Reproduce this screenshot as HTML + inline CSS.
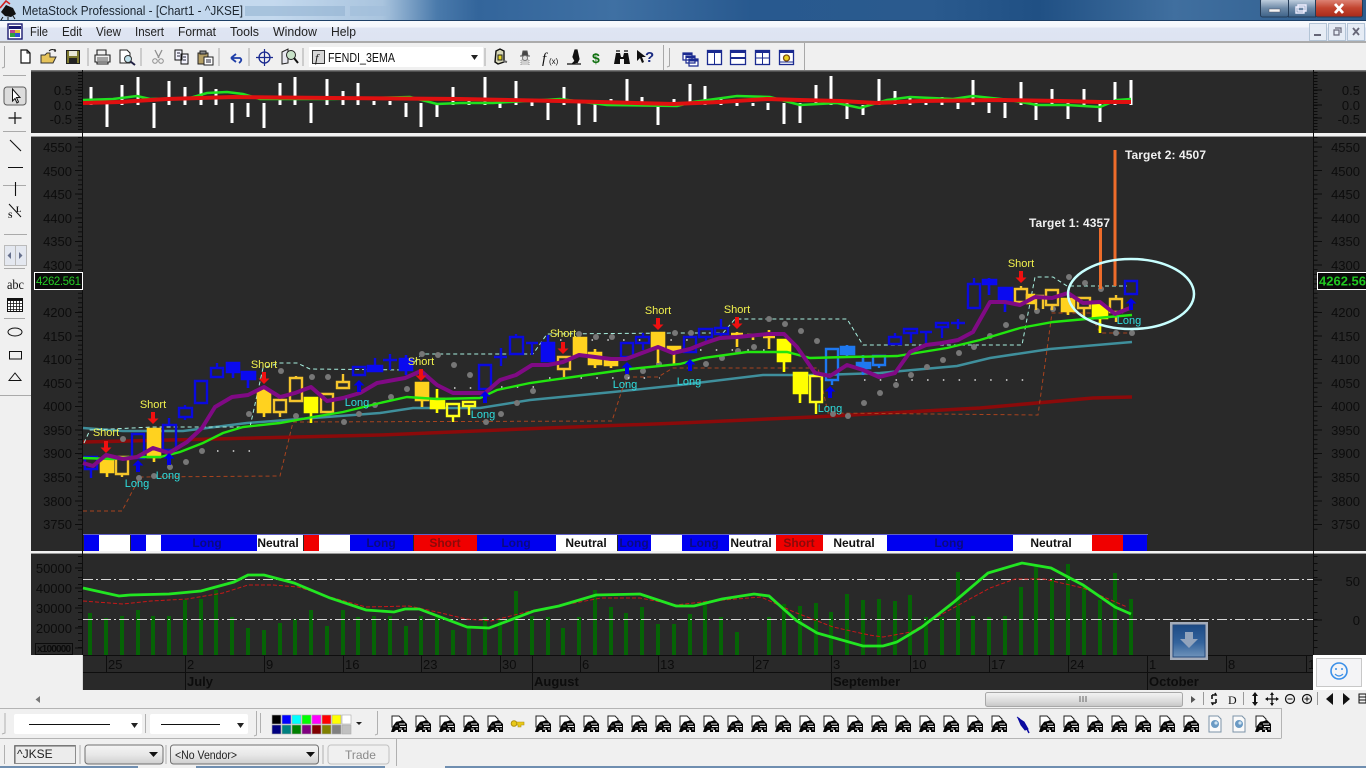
<!DOCTYPE html>
<html><head><meta charset="utf-8"><title>MetaStock</title>
<style>
html,body{margin:0;padding:0;background:#f0f0f0;overflow:hidden}
svg{display:block;position:absolute;left:0;top:0}
text{font-family:"Liberation Sans",sans-serif}
.ax{font-size:13px;fill:#0c0c0c;text-anchor:end}
.dt{font-size:13px;fill:#0c0c0c}
.mo{font-size:13px;font-weight:bold;fill:#0c0c0c}
.sh{font-size:11px;fill:#f2f24e;text-anchor:middle}
.lg{font-size:11px;fill:#2fdede;text-anchor:middle}
.sg{font-size:12px;font-weight:bold;text-anchor:middle}
.mn{font-size:13px;fill:#222}
</style></head><body>
<svg width="1366" height="768" viewBox="0 0 1366 768" xmlns="http://www.w3.org/2000/svg">
<defs>
<linearGradient id="tb" x1="0" x2="1" y1="0" y2="0">
<stop offset="0" stop-color="#c0d6ec"/><stop offset=".2" stop-color="#c4d9ee"/><stop offset=".28" stop-color="#a9c4de"/><stop offset=".32" stop-color="#4a7aab"/><stop offset=".35" stop-color="#33659b"/><stop offset=".45" stop-color="#3f70a3"/><stop offset=".55" stop-color="#28598f"/><stop offset=".68" stop-color="#2a5a8e"/><stop offset=".76" stop-color="#205084"/><stop offset=".86" stop-color="#406f9f"/><stop offset="1" stop-color="#2d5c8d"/>
</linearGradient>
<linearGradient id="mb" x1="0" x2="0" y1="0" y2="1"><stop offset="0" stop-color="#f7f9fd"/><stop offset=".3" stop-color="#f3f6fb"/><stop offset=".35" stop-color="#dfe5f3"/><stop offset="1" stop-color="#dde4f2"/></linearGradient>
<linearGradient id="cl" x1="0" x2="0" y1="0" y2="1"><stop offset="0" stop-color="#e08a7c"/><stop offset=".5" stop-color="#c2442f"/><stop offset="1" stop-color="#a82a1a"/></linearGradient>
<linearGradient id="gb" x1="0" x2="0" y1="0" y2="1"><stop offset="0" stop-color="#c8d6e4"/><stop offset=".5" stop-color="#6f8ba8"/><stop offset="1" stop-color="#3d6288"/></linearGradient>
<linearGradient id="cb" x1="0" x2="0" y1="0" y2="1"><stop offset="0" stop-color="#f5f5f5"/><stop offset=".5" stop-color="#e8e8e8"/><stop offset="1" stop-color="#cfcfcf"/></linearGradient>
<linearGradient id="th" x1="0" x2="0" y1="0" y2="1"><stop offset="0" stop-color="#f4f4f4"/><stop offset=".6" stop-color="#dcdcdc"/><stop offset="1" stop-color="#c6c6c6"/></linearGradient>
<linearGradient id="db" x1="0" x2="0" y1="0" y2="1"><stop offset="0" stop-color="#1c4a85"/><stop offset=".55" stop-color="#33639c"/><stop offset="1" stop-color="#6e93ba"/></linearGradient>
<path id="dn" fill="#f01010" d="M-2 0H2V6.500H5.500L0 12L-5.500 6.500H-2Z"/>
<path id="up" fill="#0000e8" d="M-2 12H2V5.500H5.500L0 0L-5.500 5.500H-2Z"/>
<g id="sp"><path d="M-7-8H0L3-5V-2H-2V3H-7Z" fill="#fff" stroke="#222" stroke-width="1"/><path d="M-8 8L-6 2L-3-2L1-3L4-4L8 0V8H4V6H2V8H-1V6H-3L-5 8Z" fill="#060606"/><path d="M0 0H6M1 2.500H7M0 5H3M5 5H7" stroke="#f0f0f0" fill="none" stroke-width="1"/><path d="M-4 2H-1" stroke="#888" fill="none"/></g>
<g id="dc"><path d="M-6-8H3L6-5V8H-6Z" fill="#fafafa" stroke="#7c93a8"/><circle cy="0" r="4" fill="#6a9ac4"/><circle cx="1" cy="-1" r="1.600" fill="#cfe3f2"/></g>
</defs>

<rect width="1366" height="768" fill="#f0f0f0"/>
<rect width="1366" height="21" fill="url(#tb)"/>
<rect y="20" width="1366" height="1" fill="#1d3f66"/>
<path d="M1 12L6 5L13 8L16 14L11 17L5 16Z" fill="#111"/><path d="M0 8L6 1L10 4" stroke="#d02020" fill="none" stroke-width="1.600"/><path d="M3 17L1 20M8 17L8 20M13 16L15 19" stroke="#111"/>
<text x="22" y="15" font-size="13" fill="#1c2630" textLength="221" lengthAdjust="spacingAndGlyphs">MetaStock Professional - [Chart1 - ^JKSE]</text>
<rect x="245" y="6" width="100" height="10" fill="#8fb0d0" opacity=".55"/><rect x="350" y="6" width="40" height="10" fill="#9fbcd8" opacity=".55"/>
<rect x="1260.500" y="-1" width="28" height="18" rx="2" fill="url(#gb)" stroke="#243c58"/>
<rect x="1288.500" y="-1" width="27" height="18" fill="url(#gb)" stroke="#243c58"/>
<rect x="1315.500" y="-1" width="47" height="18" rx="2" fill="url(#cl)" stroke="#243c58"/>
<rect x="1269" y="9" width="11" height="3" fill="#f4f4f4" stroke="#445" stroke-width=".4"/>
<path d="M1298 5H1306V11H1298ZM1296 7H1304V13H1296Z" fill="none" stroke="#eef" stroke-width="1.400"/>
<path d="M1335 4L1343 13M1343 4L1335 13" stroke="#fff" stroke-width="2.800"/>

<rect y="21" width="1366" height="20" fill="url(#mb)"/>
<rect y="41" width="1366" height="2" fill="#ababab"/>
<rect x="8" y="24" width="14" height="15" fill="#fff" stroke="#1a1a70" stroke-width="1.400"/><rect x="9" y="26" width="12" height="3" fill="#1a1a70"/><rect x="10" y="30" width="5" height="3" fill="#c04090"/><rect x="15" y="30" width="5" height="3" fill="#e0c030"/><rect x="10" y="33" width="5" height="4" fill="#30a040"/><rect x="15" y="33" width="5" height="4" fill="#3050d0"/>
<text class="mn" x="30" y="36" textLength="18" lengthAdjust="spacingAndGlyphs">File</text><text class="mn" x="62" y="36" textLength="20" lengthAdjust="spacingAndGlyphs">Edit</text><text class="mn" x="96" y="36" textLength="25" lengthAdjust="spacingAndGlyphs">View</text><text class="mn" x="135" y="36" textLength="29" lengthAdjust="spacingAndGlyphs">Insert</text><text class="mn" x="178" y="36" textLength="38" lengthAdjust="spacingAndGlyphs">Format</text><text class="mn" x="230" y="36" textLength="29" lengthAdjust="spacingAndGlyphs">Tools</text><text class="mn" x="273" y="36" textLength="44" lengthAdjust="spacingAndGlyphs">Window</text><text class="mn" x="331" y="36" textLength="25" lengthAdjust="spacingAndGlyphs">Help</text>
<rect x="1309.500" y="23.500" width="17" height="17" fill="#e6ecf5" stroke="#b3c4d6"/><rect x="1328.500" y="23.500" width="17" height="17" fill="#e6ecf5" stroke="#b3c4d6"/><rect x="1347.500" y="23.500" width="17" height="17" fill="#e6ecf5" stroke="#b3c4d6"/>
<rect x="1314" y="34" width="7" height="2" fill="#667"/>
<path d="M1335 28H1341V33M1334 30H1339V35H1334Z" fill="none" stroke="#667" stroke-width="1.200"/>
<path d="M1353 28L1359 35M1359 28L1353 35" stroke="#667" stroke-width="1.800"/>

<!-- top toolbar -->
<path d="M4.500 46V67L2 68M88 48V66M141 48V66M219 48V66M249 48V66M303 48V66M485 48V66M663.500 45V70M669.500 48V66L667 67M804.500 43V70" stroke="#a8a8a8" fill="none"/>
<rect x="309" y="47" width="174" height="20" fill="#fff"/>
<path d="M21 50H27L30 53V63H21Z" fill="#fff" stroke="#111" stroke-width="1.200"/><path d="M27 50V53H30" fill="none" stroke="#111"/>
<path d="M41 62V55H45L47 53H50V57H56L53 63H41Z" fill="#e6c35a" stroke="#333"/><path d="M49 51Q52 48 56 51M55 49V52" stroke="#111" fill="none"/>
<rect x="66.500" y="50.500" width="13" height="13" fill="#7d7a30" stroke="#222"/><rect x="69" y="51" width="8" height="5" fill="#e8e8d8"/><rect x="69" y="58" width="8" height="5" fill="#222"/>
<path d="M97 50H106V55H97ZM95 55H110V62H95ZM97 62H108V64H97Z" fill="#f0f0f0" stroke="#222" stroke-width="1.100"/><path d="M97 58H108M97 60H108" stroke="#555"/>
<path d="M120 50H127L130 53V63H120Z" fill="#fff" stroke="#222"/><circle cx="128" cy="59" r="3.500" fill="#bfe0ea" stroke="#333"/><path d="M130.500 61.500L135 65" stroke="#224" stroke-width="2"/>
<path d="M155 50L159 58M162 50L158 58" stroke="#8f8f8f" stroke-width="1.300"/><circle cx="155" cy="61" r="2.300" fill="none" stroke="#8f8f8f"/><circle cx="161" cy="61" r="2.300" fill="none" stroke="#8f8f8f"/>
<path d="M175 50H182V60H175ZM181 54H188V64H181Z" fill="#f4f4ff" stroke="#111"/><path d="M177 53H180M177 56H180M183 57H186M183 60H186" stroke="#223"/>
<path d="M198 53H208V64H198Z" fill="#b59f65" stroke="#222"/><rect x="200" y="51" width="6" height="3" fill="#888" stroke="#222"/><path d="M204 57H213V65H204Z" fill="#fff" stroke="#222"/><path d="M206 60H211M206 62H211" stroke="#223"/>
<path d="M231 58L236 54M231 58L236 62M231 58H240Q243 60 239 63" fill="none" stroke="#1f3fa8" stroke-width="1.800"/>
<circle cx="264.500" cy="57.500" r="5.500" fill="none" stroke="#1a2a90" stroke-width="1.300"/><path d="M264.500 49V66M256 57.500H273" stroke="#1a2a90" stroke-width="1.200"/>
<path d="M282 52L288 49V63L282 64Z" fill="#e8e8f0" stroke="#222"/><circle cx="291" cy="55" r="4.500" fill="#c8e2c8" stroke="#222"/><path d="M294 58L298 63" stroke="#111" stroke-width="2"/>
<rect x="312.500" y="50.500" width="12" height="13" fill="#d8d8d8" stroke="#333"/><text x="315" y="62" font-size="12" font-style="italic" fill="#111" style="font-family:'Liberation Serif',serif">f</text>
<text x="328" y="62" font-size="13" fill="#111" textLength="67" lengthAdjust="spacingAndGlyphs">FENDI_3EMA</text>
<path d="M471 55H478L474.500 60Z" fill="#222"/>
<path d="M496 51L500 49L504 51V62L498 64L495 62Z" fill="#d8d8b8" stroke="#111" stroke-width="1.400"/><path d="M498 55H502V60H498Z" fill="#e8d820" stroke="#222"/><path d="M503 61L507 62" stroke="#666" stroke-width="2"/>
<path d="M520 56H530M522 56L523 51H527L528 56" fill="#444" stroke="#555"/><path d="M521 65V60L525 58L529 60V65" fill="#cfcfcf" stroke="#999" stroke-dasharray="1 1"/><circle cx="525" cy="58" r="2.500" fill="#ddd" stroke="#777"/>
<text x="542" y="63" font-size="15" font-style="italic" fill="#111" style="font-family:'Liberation Serif',serif">f</text><text x="549" y="64" font-size="8" fill="#111">(x)</text>
<path d="M567 64H581M572 64L575 61L573 57L575 50H577L579 59L577 63" fill="#111" stroke="#111" stroke-width="1.200"/>
<text x="592" y="63" font-size="14" font-weight="bold" fill="#107010">$</text>
<path d="M614 64L616 53H620L621 57H623L624 53H628L630 64H624V59H620V64Z" fill="#111"/><path d="M616 51H620M624 51H628" stroke="#333" stroke-width="1.500"/>
<path d="M637 50V61L640 58L642 63L644 62L642 57H646Z" fill="#111"/><text x="645" y="62" font-size="15" font-weight="bold" fill="#1a2a80">?</text>
<path d="M683 53H692V60H683ZM686 56H695V63H686ZM689 59H698V66H689Z" fill="#fff" stroke="#1a2a90" stroke-width="1.200"/><rect x="683" y="53" width="9" height="2" fill="#1a2a90"/><rect x="686" y="56" width="9" height="2" fill="#1a2a90"/><rect x="689" y="59" width="9" height="2.500" fill="#1a2a90"/>
<rect x="707.500" y="50.500" width="14" height="14" fill="#fff" stroke="#1a2a90" stroke-width="1.300"/><rect x="707" y="50" width="15" height="3" fill="#1a2a90"/><path d="M714.500 52V64" stroke="#1a2a90"/>
<rect x="730.500" y="50.500" width="15" height="14" fill="#fff" stroke="#1a2a90" stroke-width="1.300"/><rect x="730" y="50" width="16" height="3" fill="#1a2a90"/><rect x="730" y="57" width="16" height="2" fill="#1a2a90"/>
<rect x="755.500" y="50.500" width="14" height="14" fill="#fff" stroke="#1a2a90" stroke-width="1.300"/><rect x="755" y="50" width="15" height="3" fill="#1a2a90"/><path d="M755 58H770M762.500 52V65" stroke="#1a2a90"/>
<rect x="779.500" y="50.500" width="14" height="14" fill="#fff" stroke="#1a2a90" stroke-width="1.300"/><rect x="779" y="50" width="15" height="3" fill="#1a2a90"/><circle cx="786.500" cy="58" r="3" fill="#e8d020" stroke="#805010" stroke-width="1.300"/><path d="M780 62H793" stroke="#1a2a90"/>

<!-- panels -->
<rect x="31" y="70" width="1335" height="585" fill="#292929"/>
<rect x="31" y="70" width="1335" height="1.500" fill="#777"/>
<rect x="31" y="133" width="1335" height="3" fill="#f2f2f2"/><rect x="31" y="136" width="1335" height="1" fill="#999"/>
<rect x="31" y="551" width="1335" height="2.500" fill="#f2f2f2"/><rect x="31" y="553" width="1335" height="1" fill="#999"/>
<rect x="82" y="655" width="1231" height="35" fill="#292929"/>
<path d="M82.500 70V690M1313.500 70V655" stroke="#0e0e0e"/>
<path d="M82 655.500H1313M82 672.500H1313" stroke="#0e0e0e"/>
<path d="M82.500 655V690" stroke="#d8d8d8"/>
<!-- axis ticks -->
<g fill="none" stroke="#0c0c0c">
<path d="M80 137V533M1315.500 137V533" stroke-width="4" stroke-dasharray="1 3.720"/>
<path d="M80 72V132M1315.500 72V132" stroke-width="4" stroke-dasharray="1 2"/>
<path d="M80 556V654M1315.500 556V654" stroke-width="4" stroke-dasharray="1 6"/>
<path d="M75 147H82M75 170.500H82M75 194H82M75 218H82M75 241.500H82M75 265H82M75 312.500H82M75 336H82M75 359.500H82M75 383H82M75 406.500H82M75 430H82M75 453.500H82M75 477H82M75 501H82M75 524.500H82M1313 147H1322M1313 170.500H1322M1313 194H1322M1313 218H1322M1313 241.500H1322M1313 265H1322M1313 312.500H1322M1313 336H1322M1313 359.500H1322M1313 383H1322M1313 406.500H1322M1313 430H1322M1313 453.500H1322M1313 477H1322M1313 501H1322M1313 524.500H1322"/>
<path d="M75 90H82M75 105H82M75 118H82M1313 90H1322M1313 105H1322M1313 118H1322M75 568H82M75 588H82M75 608H82M75 628H82M75 648H82M1313 580H1322M1313 620H1322"/>
</g>
<!-- axis text -->
<g class="ax">
<text class="ax" x="72" y="95">0.5</text><text class="ax" x="72" y="110">0.0</text><text class="ax" x="72" y="124">-0.5</text>
<text class="ax" x="1360" y="95">0.5</text><text class="ax" x="1360" y="110">0.0</text><text class="ax" x="1360" y="124">-0.5</text>
<text class="ax" x="72" y="152">4550</text><text class="ax" x="72" y="176">4500</text><text class="ax" x="72" y="199">4450</text><text class="ax" x="72" y="223">4400</text><text class="ax" x="72" y="246">4350</text><text class="ax" x="72" y="270">4300</text><text class="ax" x="72" y="317">4200</text><text class="ax" x="72" y="341">4150</text><text class="ax" x="72" y="364">4100</text><text class="ax" x="72" y="388">4050</text><text class="ax" x="72" y="411">4000</text><text class="ax" x="72" y="435">3950</text><text class="ax" x="72" y="458">3900</text><text class="ax" x="72" y="482">3850</text><text class="ax" x="72" y="506">3800</text><text class="ax" x="72" y="529">3750</text>
<text class="ax" x="1360" y="152">4550</text><text class="ax" x="1360" y="176">4500</text><text class="ax" x="1360" y="199">4450</text><text class="ax" x="1360" y="223">4400</text><text class="ax" x="1360" y="246">4350</text><text class="ax" x="1360" y="270">4300</text><text class="ax" x="1360" y="317">4200</text><text class="ax" x="1360" y="341">4150</text><text class="ax" x="1360" y="364">4100</text><text class="ax" x="1360" y="388">4050</text><text class="ax" x="1360" y="411">4000</text><text class="ax" x="1360" y="435">3950</text><text class="ax" x="1360" y="458">3900</text><text class="ax" x="1360" y="482">3850</text><text class="ax" x="1360" y="506">3800</text><text class="ax" x="1360" y="529">3750</text>
<text class="ax" x="72" y="573">50000</text><text class="ax" x="72" y="593">40000</text><text class="ax" x="72" y="613">30000</text><text class="ax" x="72" y="633">20000</text>
<text class="ax" x="1360" y="586">50</text><text class="ax" x="1360" y="625">0</text>
</g>
<rect x="35.500" y="643.500" width="37" height="11" fill="none" stroke="#0c0c0c"/><text x="37" y="652" font-size="10" font-weight="bold" fill="#0c0c0c" textLength="34">x100000</text>

<!-- top panel -->
<path fill="none" stroke="#fff" stroke-width="3" d="M91 87V105M107 103V127M122 85V105M138 77V105M154 103V128M169 81V105M185 87V105M201 77V105M216 89V105M232 103V123M248 103V117M264 103V128M280 83V105M295 77V105M311 103V123M327 79V105M343 91V105M358 83V105M374 101V105M390 101V105M406 103V117M421 103V127M437 103V117M453 87V105M469 98V105M485 77V105M500 103V108M516 81V105M532 102V106M548 103V120M564 87V105M579 103V125M595 103V122M611 99V105M627 79V105M642 97V105M658 103V125M674 99V107M690 84V105M705 86V105M721 98V105M737 103V106M753 103V106M768 103V110M784 103V124M800 103V123M816 85V105M831 76V105M847 103V119M863 105V115M879 79V105M895 91V105M910 97V105M926 103V105M942 97V105M958 103V109M973 80V105M989 103V113M1005 103V118M1021 82V105M1036 103V120M1052 89V105M1068 103V119M1084 89V105M1100 103V122M1115 82V105M1131 80V105"/>
<polyline fill="none" stroke="#20e020" stroke-width="2.500" points="83,100 113,99 137,96 150,99 190,98 207,93 227,92 243,94 260,99 333,99 410,97 437,104 460,103 493,103 560,99 607,105 677,106 693,102 737,96 770,97 800,105 837,103 860,108 887,100 910,97 953,99 973,96 1010,100 1037,105 1067,105 1100,107 1117,100 1131,99"/>
<polyline fill="none" stroke="#e01010" stroke-width="4" points="83,103 120,102 167,99 233,97 333,98 460,99 560,101 600,102 673,104 720,102 767,99 800,100 840,101 877,103 920,101 1000,100 1060,101 1100,102 1131,102"/>

<!-- main chart: background lines -->
<g fill="none">
<polyline stroke="#3f8f9c" stroke-width="2.500" points="83,428 123,431 183,431 247,423 313,418 380,413 413,408 480,408 530,400 613,392 680,385 763,375 820,375 880,373 957,366 990,358 1050,349 1132,342"/>
<polyline stroke="#8b0a0a" stroke-width="3.500" points="83,442 213,439 380,435 547,428 680,423 813,417 980,408 1093,398 1132,397"/>
<polyline stroke="#a8f0e0" stroke-width="1" stroke-dasharray="4 3" points="84,443 90,430 153,427 200,427 250,427 263,368 280,363 297,363 310,369 407,370 422,354 533,354 547,334 677,333 723,333 735,319 847,319 863,345 1022,345 1035,277 1053,277 1067,286 1127,286"/>
<polyline stroke="#a8431e" stroke-width="1" stroke-dasharray="4 3" points="83,511 122,511 133,490 140,477 280,476 293,422 612,421 622,390 628,377 658,377 673,368 818,368 828,413 1038,415 1052,313 1090,313 1100,333 1130,333"/>
</g>
<!-- grey dots -->
<g fill="#777">
<circle cx="123" cy="439" r="3"/><circle cx="139" cy="478" r="3"/><circle cx="154" cy="476" r="3"/><circle cx="170" cy="467" r="3"/><circle cx="186" cy="462" r="3"/><circle cx="202" cy="451" r="3"/><circle cx="249" cy="414" r="3"/><circle cx="281" cy="371" r="3"/><circle cx="296" cy="416" r="3"/><circle cx="312" cy="377" r="3"/><circle cx="328" cy="377" r="3"/><circle cx="344" cy="422" r="3"/><circle cx="359" cy="414" r="3"/><circle cx="375" cy="405" r="3"/><circle cx="391" cy="397" r="3"/><circle cx="407" cy="389" r="3"/><circle cx="422" cy="354" r="3"/><circle cx="438" cy="355" r="3"/><circle cx="454" cy="365" r="3"/><circle cx="470" cy="375" r="3"/><circle cx="486" cy="422" r="3"/><circle cx="501" cy="414" r="3"/><circle cx="517" cy="403" r="3"/><circle cx="533" cy="391" r="3"/><circle cx="579" cy="334" r="3"/><circle cx="596" cy="337" r="3"/><circle cx="612" cy="337" r="3"/><circle cx="627" cy="377" r="3"/><circle cx="643" cy="371" r="3"/><circle cx="659" cy="364" r="3"/><circle cx="675" cy="333" r="3"/><circle cx="691" cy="333" r="3"/><circle cx="706" cy="364" r="3"/><circle cx="722" cy="358" r="3"/><circle cx="738" cy="351" r="3"/><circle cx="754" cy="347" r="3"/><circle cx="769" cy="319" r="3"/><circle cx="785" cy="324" r="3"/><circle cx="801" cy="331" r="3"/><circle cx="817" cy="341" r="3"/><circle cx="833" cy="414" r="3"/><circle cx="848" cy="416" r="3"/><circle cx="864" cy="403" r="3"/><circle cx="880" cy="393" r="3"/><circle cx="896" cy="385" r="3"/><circle cx="911" cy="375" r="3"/><circle cx="927" cy="367" r="3"/><circle cx="943" cy="360" r="3"/><circle cx="959" cy="353" r="3"/><circle cx="974" cy="347" r="3"/><circle cx="990" cy="336" r="3"/><circle cx="1006" cy="325" r="3"/><circle cx="1022" cy="317" r="3"/><circle cx="1037" cy="311" r="3"/><circle cx="1053" cy="309" r="3"/><circle cx="1069" cy="277" r="3"/><circle cx="1085" cy="283" r="3"/><circle cx="1101" cy="289" r="3"/><circle cx="1116" cy="333" r="3"/><circle cx="1132" cy="333" r="3"/>
</g>
<path stroke="#ddd" stroke-width="1.500" fill="none" stroke-dasharray="1.500 14.270" d="M217 451H260M454 388H480M501 387H540M549 378H660M864 380H1030M560 340H690M700 350H775"/>

<!-- candles -->
<path fill="none" stroke="#0a0ae0" stroke-width="2.400" d="M85 457H97V469H85ZM91 469V478M132 434H144V458H132ZM163 425H176V450H163ZM169 418V425M179 408H192V417H179ZM185 405V408M185 417V420M195 381H207V403H195ZM211 368H223V377H211ZM217 363V368M353 367H365V375H353ZM479 365H491V389H479ZM510 337H523V354H510ZM516 334V337M526 343H538M532 343V355M383 360H397M390 354V370M494 357H507M501 348V366M621 343H633V357H621ZM636 337H649V343H636ZM643 333V337M643 343V350M684 337H696V352H684ZM699 329H712V337H699ZM706 337V343M715 328H728V334H715ZM721 319V328M721 334V340M889 337H901V344H889ZM895 333V337M904 329H917V333H904ZM911 333V343M920 332H932M926 332V345M936 323H948V327H936ZM942 327V338M951 323H965M958 319V329M968 284H980V308H968ZM974 278V284M1125 281H1137V294H1125ZM375 358V370"/>
<path fill="#0a0af0" stroke="#0a0af0" stroke-width="2.600" d="M227 363H239V372H227ZM233 372V378M242 372H255V379H242ZM248 379V388M368 366H382V371H368ZM400 359H412V370H400ZM406 355V375M542 343H554V361H542ZM548 335V343M983 280H996V284H983ZM989 278V295M999 288H1012V301H999ZM1005 301V312"/>
<path fill="none" stroke="#1e78f0" stroke-width="2.400" d="M826 349H838V380H826ZM832 380V385M873 356H885V365H873ZM879 365V368"/>
<path fill="#1e78f0" stroke="#1e78f0" stroke-width="2.600" d="M841 347H854V354H841ZM847 345V358M857 363H870V368H857ZM863 355V375"/>
<path fill="#ffd21f" stroke="#ffd21f" stroke-width="2.600" d="M101 459H113V472H101ZM107 472V477M148 429H160V457H148ZM154 457V462M258 392L264 388L270 392V412H258ZM264 412V417M416 383H428V400H416ZM422 400V407M574 338H586V355H574ZM589 353H601V364H589ZM595 349V368M605 361H617V365H605ZM611 357V368M652 333H664V347H652ZM658 347V363M668 347H680V351H668ZM674 351V365M731 334H743M737 332V347M747 335H759M753 335V340M763 337H775M769 330V349M1027 295H1034V303H1027ZM1062 299H1074V311H1062ZM1068 311V315"/>
<path fill="#ffff00" stroke="#ffff00" stroke-width="2.600" d="M305 398H317V412H305ZM311 412V423M431 399H444V408H431ZM437 389V413M778 340H790V361H778ZM784 361V372M794 373H807V393H794ZM800 393V403M1093 304H1100L1107 311V318H1093ZM1100 318V333"/>
<path fill="none" stroke="#f5c52c" stroke-width="2.400" d="M116 457H128V474H116ZM122 474V477M274 400H286V412H274ZM280 412V417M290 378H302V401H290ZM296 376V378M321 394H333V412H321ZM337 382H349V388H337ZM343 374V382M558 357H570V369H558ZM564 369V377M1015 289H1027V302H1015ZM1021 286V289M1036 296H1043V309M1036 296V310M1046 290H1058V305H1046ZM1052 305V310M1078 298H1090V308H1078ZM1084 308V317M1110 299H1122V312H1110ZM1116 295V299M1116 312V322"/>
<path fill="none" stroke="#ffff1a" stroke-width="2.400" d="M447 404H459V416H447ZM453 416V422M463 402H475V406H463ZM469 406V415M810 376H822V402H810ZM816 402V414"/>

<!-- MAs on top -->
<polyline fill="none" stroke="#22e60f" stroke-width="2.400" points="83,458 113,459 130,457 160,457 180,452 203,443 223,433 243,427 280,423 313,417 343,412 380,403 407,397 437,399 480,398 497,390 530,383 580,376 630,369 680,364 703,358 747,352 787,352 810,358 847,357 897,356 947,348 980,340 1020,328 1053,322 1097,318 1132,315"/>
<polyline fill="none" stroke="#800a85" stroke-width="4" stroke-linejoin="round" points="83,463 93,466 106,455 123,459 137,457 153,448 169,453 187,442 202,428 215,407 232,397 248,395 264,387 280,397 295,393 311,387 327,401 343,398 360,393 377,383 405,378 421,371 437,385 453,393 468,393 485,393 500,380 516,375 532,365 548,365 563,362 579,355 595,357 611,359 626,359 642,353 658,347 673,353 690,349 705,343 720,338 737,337 768,334 784,334 797,347 815,373 830,376 847,365 863,370 879,377 895,373 910,352 926,345 942,343 958,340 973,332 990,302 1005,302 1020,305 1035,297 1052,298 1068,293 1083,303 1100,302 1115,314 1130,308"/>

<!-- arrows -->
<use href="#dn" x="106" y="441"/><use href="#dn" x="153" y="412"/><use href="#dn" x="264" y="372"/><use href="#dn" x="421" y="369"/><use href="#dn" x="563" y="342"/><use href="#dn" x="658" y="318"/><use href="#dn" x="737" y="317"/><use href="#dn" x="1021" y="271"/>
<use href="#up" x="138" y="460"/><use href="#up" x="169" y="453"/><use href="#up" x="359" y="380"/><use href="#up" x="485" y="391"/><use href="#up" x="627" y="362"/><use href="#up" x="690" y="359"/><use href="#up" x="830" y="386"/><use href="#up" x="1131" y="298"/>

<!-- labels -->
<text class="sh" x="106" y="436">Short</text><text class="sh" x="153" y="408">Short</text><text class="sh" x="264" y="368">Short</text><text class="sh" x="421" y="365">Short</text><text class="sh" x="563" y="337">Short</text><text class="sh" x="658" y="314">Short</text><text class="sh" x="737" y="313">Short</text><text class="sh" x="1021" y="267">Short</text>
<text class="lg" x="137" y="487">Long</text><text class="lg" x="168" y="479">Long</text><text class="lg" x="357" y="406">Long</text><text class="lg" x="483" y="418">Long</text><text class="lg" x="625" y="388">Long</text><text class="lg" x="689" y="385">Long</text><text class="lg" x="830" y="412">Long</text><text class="lg" x="1129" y="324">Long</text>

<!-- targets -->
<path d="M1100.500 228V289M1115 150V286" stroke="#ee6c2a" stroke-width="3"/>
<ellipse cx="1131" cy="294" rx="63" ry="35" fill="none" stroke="#c8ffff" stroke-width="2.500"/>
<text x="1125" y="159" font-size="12" font-weight="bold" fill="#f0f0f0" textLength="81">Target 2: 4507</text>
<text x="1029" y="227" font-size="12" font-weight="bold" fill="#f0f0f0" textLength="81">Target 1: 4357</text>

<!-- price boxes -->
<rect x="34.500" y="272.500" width="48" height="17" fill="#0a0a0a" stroke="#fff"/>
<text x="36" y="285" font-size="11.500" fill="#25c825" textLength="45">4262.561</text>
<rect x="1317.500" y="272.500" width="50" height="17" fill="#0a0a0a" stroke="#fff"/>
<text x="1319" y="285.500" font-size="13" font-weight="bold" fill="#20c820" textLength="47">4262.56</text>

<!-- signal strip -->
<rect x="83" y="534" width="1065" height="1" fill="#6060c8"/>
<rect x="84" y="535" width="15" height="16" fill="#0000f0"/><rect x="99" y="535" width="31" height="16" fill="#fff"/><rect x="131" y="535" width="15" height="16" fill="#0000f0"/><rect x="146" y="535" width="15" height="16" fill="#fff"/>
<rect x="161" y="535" width="96" height="16" fill="#0000f0"/><rect x="257" y="535" width="46" height="16" fill="#fff"/><rect x="304" y="535" width="15" height="16" fill="#f00000"/><rect x="319" y="535" width="31" height="16" fill="#fff"/>
<rect x="350" y="535" width="63" height="16" fill="#0000f0"/><rect x="414" y="535" width="63" height="16" fill="#f00000"/><rect x="477" y="535" width="79" height="16" fill="#0000f0"/><rect x="556" y="535" width="61" height="16" fill="#fff"/>
<rect x="618" y="535" width="33" height="16" fill="#0000f0"/><rect x="651" y="535" width="31" height="16" fill="#fff"/><rect x="682" y="535" width="47" height="16" fill="#0000f0"/><rect x="729" y="535" width="47" height="16" fill="#fff"/>
<rect x="776" y="535" width="47" height="16" fill="#f00000"/><rect x="823" y="535" width="64" height="16" fill="#fff"/><rect x="887" y="535" width="126" height="16" fill="#0000f0"/><rect x="1013" y="535" width="79" height="16" fill="#fff"/><rect x="1092" y="535" width="31" height="16" fill="#f00000"/><rect x="1123" y="535" width="24" height="16" fill="#0000f0"/>
<text class="sg" x="207" y="547" fill="#0a0a80">Long</text><text class="sg" x="278" y="547" fill="#111">Neutral</text><text class="sg" x="381" y="547" fill="#0a0a80">Long</text><text class="sg" x="445" y="547" fill="#8a0a0a">Short</text><text class="sg" x="516" y="547" fill="#0a0a80">Long</text><text class="sg" x="586" y="547" fill="#111">Neutral</text><text class="sg" x="634" y="547" fill="#0a0a80">Long</text><text class="sg" x="704" y="547" fill="#0a0a80">Long</text><text class="sg" x="751" y="547" fill="#111">Neutral</text><text class="sg" x="799" y="547" fill="#8a0a0a">Short</text><text class="sg" x="854" y="547" fill="#111">Neutral</text><text class="sg" x="949" y="547" fill="#0a0a80">Long</text><text class="sg" x="1051" y="547" fill="#111">Neutral</text>

<!-- volume -->
<path fill="none" stroke="#056405" stroke-width="4" d="M90 655V613M106 655V618M122 655V616M138 655V610M153 655V616M169 655V616M185 655V600M201 655V599M216 655V590M232 655V617M248 655V628M264 655V630M280 655V623M295 655V619M311 655V610M327 655V626M343 655V610M358 655V617M374 655V616M390 655V616M406 655V626M421 655V616M437 655V617M453 655V630M469 655V626M485 655V617M500 655V619M516 655V591M532 655V616M548 655V617M563 655V628M579 655V617M595 655V590M611 655V607M626 655V613M642 655V607M658 655V624M674 655V624M690 655V614M705 655V604M721 655V617M737 655V632M769 655V617M784 655V604M800 655V606M816 655V603M831 655V612M847 655V594M863 655V600M879 655V599M895 655V601M910 655V595M926 655V617M942 655V617M958 655V572M973 655V616M989 655V617M1005 655V616M1021 655V587M1036 655V565M1052 655V578M1068 655V564M1084 655V587M1100 655V600M1115 655V573M1131 655V599"/>
<path d="M83 579.500H1313M83 619.500H1313" stroke="#d8d8d8" stroke-dasharray="10 3 2 3" fill="none"/>
<polyline fill="none" stroke="#c81818" stroke-width="1" stroke-dasharray="4 2" points="83,601 123,604 151,601 187,599 223,593 248,585 273,585 298,587 330,597 366,607 409,606 437,612 466,619 491,621 530,611 580,602 601,598 640,598 676,605 711,601 761,597 794,612 833,627 869,635 883,637 911,632 944,613 990,588 1015,579 1044,579 1083,588 1127,607"/>
<polyline fill="none" stroke="#22e622" stroke-width="2.800" points="83,588 119,596 130,595 169,594 201,591 234,582 248,575 264,575 294,583 330,598 366,610 394,612 405,609 419,609 467,627 489,628 534,611 559,606 596,595 640,594 676,606 694,606 722,599 754,594 769,596 797,621 817,633 863,646 883,646 897,642 922,627 954,602 988,573 1022,563 1051,568 1083,585 1115,607 1131,614"/>

<!-- date axis -->
<path stroke="#0e0e0e" fill="none" d="M106.500 655V672M185.500 655V690M264.500 655V672M343.500 655V672M421.500 655V672M500.500 655V672M532.500 655V690M580.500 655V672M658.500 655V672M753.500 655V672M831.500 655V690M910.500 655V672M989.500 655V672M1068.500 655V672M1147.500 655V690M1226.500 655V672M1306.500 655V672"/>
<text class="dt" x="108" y="669">25</text><text class="dt" x="187" y="669">2</text><text class="dt" x="266" y="669">9</text><text class="dt" x="345" y="669">16</text><text class="dt" x="423" y="669">23</text><text class="dt" x="502" y="669">30</text><text class="dt" x="582" y="669">6</text><text class="dt" x="660" y="669">13</text><text class="dt" x="755" y="669">27</text><text class="dt" x="833" y="669">3</text><text class="dt" x="912" y="669">10</text><text class="dt" x="991" y="669">17</text><text class="dt" x="1070" y="669">24</text><text class="dt" x="1149" y="669">1</text><text class="dt" x="1228" y="669">8</text><text class="dt" x="1308" y="669">1</text>
<text class="mo" x="187" y="686">July</text><text class="mo" x="534" y="686">August</text><text class="mo" x="833" y="686">September</text><text class="mo" x="1149" y="686">October</text>

<!-- down button + smiley -->
<rect x="1170" y="622" width="38" height="38" fill="#a4acba"/><rect x="1173" y="625" width="32" height="32" fill="url(#db)" stroke="#24497c"/>
<path d="M1185 632H1193V639H1198L1189 648L1180 639H1185Z" fill="#92a4bc"/>
<rect x="1313" y="655" width="53" height="35" fill="#fff"/><rect x="1316.500" y="658.500" width="45" height="28" fill="#f4f4f6" stroke="#c8c8c8"/>
<circle cx="1339" cy="671" r="8" fill="none" stroke="#3a8fe8" stroke-width="1.600"/><circle cx="1336" cy="669" r="1" fill="#3a8fe8"/><circle cx="1342" cy="669" r="1" fill="#3a8fe8"/><path d="M1335 674Q1339 678 1343 674" fill="none" stroke="#3a8fe8" stroke-width="1.200"/>

<!-- scrollbar row -->
<path d="M40 696V703L35.500 699.500Z" fill="#777"/>
<rect x="985.500" y="692.500" width="197" height="14" rx="2" fill="url(#th)" stroke="#a8a8a8"/>
<path d="M1080 696V702M1083 696V702M1086 696V702" stroke="#666"/>
<path d="M1191 696V703L1195.500 699.500Z" fill="#555"/>
<path d="M1203.500 692V705M1243.500 692V705M1317.500 692V705" stroke="#999"/>
<path d="M1212 695H1216L1215 693M1216 703H1212L1213 705M1212 695V699M1216 703V699" fill="none" stroke="#111" stroke-width="1.600"/>
<text x="1228" y="704" font-size="12" fill="#111" style="font-family:'Liberation Serif',serif">D</text>
<path d="M1255 692L1258 696H1252ZM1255 706L1258 702H1252Z" fill="#111"/><path d="M1255 695V703" stroke="#111" stroke-width="2"/>
<path d="M1272 693V705M1266 699H1278" stroke="#111" stroke-width="1.300"/><path d="M1272 692L1274 695H1270ZM1272 706L1274 703H1270ZM1265 699L1268 697V701ZM1279 699L1276 697V701Z" fill="#111"/>
<circle cx="1290" cy="699" r="4.500" fill="none" stroke="#111" stroke-width="1.200"/><path d="M1287.500 699H1292.500" stroke="#111"/>
<circle cx="1307" cy="699" r="4.500" fill="none" stroke="#111" stroke-width="1.200"/><path d="M1304.500 699H1309.500M1307 696.500V701.500" stroke="#111"/>
<path d="M1333 693V705L1326 699Z" fill="#111"/><path d="M1343 693V705L1350 699Z" fill="#111"/>
<path d="M1359 694H1366V703H1359ZM1359 697H1366M1359 700H1366" fill="none" stroke="#111"/>

<!-- toolbars -->
<path d="M0 708.500H1281.500V738M0 738.500H1281.500" stroke="#b4b4b4" fill="none"/>
<path d="M5 713V733L2 734M145.500 714V733M256.500 711V735L254 736M260.500 713V733M377.500 711V734L375 735M4.500 745V764M80 745V764M166 745V764M323 745V764M396.500 739V766" stroke="#b0b0b0" fill="none"/>
<rect x="14" y="714" width="128" height="20" rx="2" fill="#fff"/><rect x="150" y="714" width="98" height="20" rx="2" fill="#fff"/>
<path d="M29 724.500H110M161 724.500H220" stroke="#111" stroke-width="1"/>
<path d="M131 723H138L134.500 728ZM237 723H244L240.500 728Z" fill="#222"/>
<g stroke="#aaa" stroke-width=".6">
<rect x="272" y="715" width="9" height="9" fill="#000"/><rect x="282" y="715" width="9" height="9" fill="#0000ff"/><rect x="292" y="715" width="9" height="9" fill="#00ffff"/><rect x="302" y="715" width="9" height="9" fill="#00ff00"/><rect x="312" y="715" width="9" height="9" fill="#ff00ff"/><rect x="322" y="715" width="9" height="9" fill="#ff0000"/><rect x="332" y="715" width="9" height="9" fill="#ffff00"/><rect x="342" y="715" width="9" height="9" fill="#fff"/>
<rect x="272" y="725" width="9" height="9" fill="#000080"/><rect x="282" y="725" width="9" height="9" fill="#008080"/><rect x="292" y="725" width="9" height="9" fill="#008000"/><rect x="302" y="725" width="9" height="9" fill="#800080"/><rect x="312" y="725" width="9" height="9" fill="#800000"/><rect x="322" y="725" width="9" height="9" fill="#808000"/><rect x="332" y="725" width="9" height="9" fill="#808080"/><rect x="342" y="725" width="9" height="9" fill="#c0c0c0"/>
</g>
<path d="M356 722H362L359 725Z" fill="#222"/>
<use href="#sp" x="399" y="724"/><use href="#sp" x="423" y="724"/><use href="#sp" x="447" y="724"/><use href="#sp" x="471" y="724"/><use href="#sp" x="495" y="724"/>
<path d="M513 722L524 722V725H521V727H518V725H515" fill="#e8c818" stroke="#b09010" stroke-width=".6"/><circle cx="514" cy="723.500" r="2.800" fill="#e8c818" stroke="#b09010"/>
<use href="#sp" x="543" y="724"/><use href="#sp" x="567" y="724"/><use href="#sp" x="591" y="724"/><use href="#sp" x="615" y="724"/><use href="#sp" x="639" y="724"/><use href="#sp" x="663" y="724"/><use href="#sp" x="687" y="724"/><use href="#sp" x="711" y="724"/><use href="#sp" x="735" y="724"/><use href="#sp" x="759" y="724"/><use href="#sp" x="783" y="724"/><use href="#sp" x="807" y="724"/><use href="#sp" x="831" y="724"/><use href="#sp" x="855" y="724"/><use href="#sp" x="879" y="724"/><use href="#sp" x="903" y="724"/><use href="#sp" x="927" y="724"/><use href="#sp" x="951" y="724"/><use href="#sp" x="975" y="724"/><use href="#sp" x="999" y="724"/>
<path d="M1018 718L1024 722L1028 729L1025 730L1021 725ZM1017 717L1020 719" fill="#0a0aa0" stroke="#0a0aa0"/><path d="M1027 729L1029 733" stroke="#0a0aa0" stroke-width="1.500"/>
<use href="#sp" x="1047" y="724"/><use href="#sp" x="1071" y="724"/><use href="#sp" x="1095" y="724"/><use href="#sp" x="1119" y="724"/><use href="#sp" x="1143" y="724"/><use href="#sp" x="1167" y="724"/><use href="#sp" x="1191" y="724"/>
<use href="#dc" x="1215" y="724"/><use href="#dc" x="1239" y="724"/><use href="#sp" x="1263" y="724"/>

<rect x="14.500" y="745.500" width="61" height="18" fill="#ececec" stroke="#8c8c8c"/><path d="M15 746H75M15 746V763" stroke="#666" fill="none"/>
<text x="17" y="758" font-size="12" fill="#222">^JKSE</text>
<rect x="85" y="745" width="78" height="19" rx="3" fill="url(#cb)" stroke="#6f6f6f"/><path d="M149 752H158L153.500 757Z" fill="#111"/>
<rect x="170.500" y="745" width="148" height="19" rx="3" fill="url(#cb)" stroke="#6f6f6f"/><path d="M306 752H315L310.500 757Z" fill="#111"/>
<text x="175" y="759" font-size="12" fill="#222" textLength="62" lengthAdjust="spacingAndGlyphs">&lt;No Vendor&gt;</text>
<rect x="328" y="745" width="61" height="19" rx="3" fill="#f0f0f0" stroke="#c0c0c0"/>
<text x="345" y="759" font-size="12" fill="#8a8a8a">Trade</text>

<rect y="766" width="1366" height="2" fill="#6f8eb0"/>
<rect x="138" y="766" width="58" height="2" fill="#f0f0f0"/><rect x="385" y="766" width="60" height="2" fill="#f0f0f0"/>

<!-- left toolbar -->
<rect x="0" y="70" width="31" height="585" fill="#f0f0f0"/>
<path d="M3 75.500H26M3 131.500H26M3 185.500H26M4 234.500H27M4 268.500H25M4 318.500H25M0 395.500H31" stroke="#aaa" fill="none"/>
<rect x="4" y="87" width="22" height="18" rx="3" fill="#dcdcdc" stroke="#5c5c5c"/>
<path d="M12.500 89V101L15 98.500L17 103L18.500 102L16.500 97.500H20Z" fill="#fff" stroke="#111"/>
<path d="M15 112V124M8.500 118H21.500" stroke="#111" stroke-width="1.200"/>
<path d="M10 140L21 151M8 167.500H23M15.500 182V196" stroke="#111" stroke-width="1.100"/>
<path d="M9 204L21 217" stroke="#111"/><text x="16" y="212" font-size="8" font-weight="bold" fill="#111" style="font-family:'Liberation Serif',serif">L</text><text x="8" y="218" font-size="8" font-weight="bold" fill="#111" style="font-family:'Liberation Serif',serif">S</text>
<rect x="4.500" y="245.500" width="11" height="20" fill="#e4e8f0" stroke="#bbb"/><rect x="15.500" y="245.500" width="11" height="20" fill="#e4e8f0" stroke="#bbb"/>
<path d="M11 252V259L7.500 255.500ZM19 252V259L22.500 255.500Z" fill="#66708c"/>
<text x="7" y="289" font-size="14" fill="#111" textLength="17" lengthAdjust="spacingAndGlyphs" style="font-family:'Liberation Serif',serif">abc</text>
<rect x="7.500" y="298.500" width="15" height="13" fill="#fff" stroke="#111"/><rect x="7" y="298" width="16" height="3" fill="#111"/><path d="M10.500 300V312M13.500 300V312M16.500 300V312M19.500 300V312M8 303.500H23M8 306.500H23M8 309.500H23" stroke="#111" stroke-width=".8"/>
<ellipse cx="15" cy="332" rx="7" ry="4" fill="none" stroke="#111"/>
<rect x="9.500" y="351.500" width="12" height="7.500" fill="none" stroke="#111"/>
<path d="M9 380.500L15 373L21 380.500Z" fill="none" stroke="#111"/>
</svg>
</body></html>
